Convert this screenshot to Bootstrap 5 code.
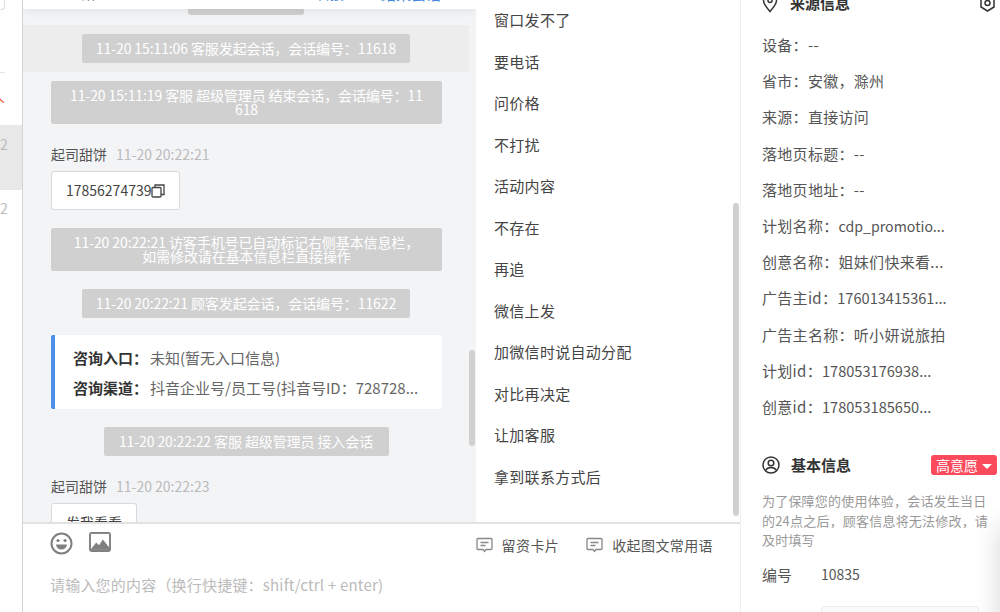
<!DOCTYPE html>
<html lang="zh">
<head>
<meta charset="utf-8">
<title>会话</title>
<link href="https://cdn.jsdelivr.net/npm/bootstrap@5.3.0/dist/css/bootstrap.min.css" rel="stylesheet">
<style>
html,body{height:612px;overflow:hidden;background:#fff}
body{font-family:"Noto Sans CJK SC",sans-serif;font-size:14px;color:#555;position:relative}
.shell{height:612px;width:1000px}
.side-rail{width:23px;flex:none;border-right:1px solid #d4d4d4;height:612px;overflow:hidden;color:#bbb;font-size:14px}
.rail-top{height:73px;border-bottom:1px solid #e6e6e6;width:5px}
.rail-top-box{width:5px;height:10px;border:1px solid #ddd;border-left:0;border-top:0;border-bottom-right-radius:4px}
.rail-name{height:52px;color:#e8623a;margin-left:-11px;padding-top:10px;font-size:16px}
.rail-sel{height:65px;background:#e8e8e8;margin-left:-8px;padding:9px 0 0 8px;text-align:left}
.rail-num{margin-left:-8px;padding:8px 0 0 8px}
.center-col{width:717px;flex:none;height:612px}
.upper-area{height:522px;overflow:hidden}
.chat-pane{width:453px;flex:none;background:#f3f4f6;height:522px;overflow:hidden;position:relative}
.chat-head{height:9px;background:#fff;box-shadow:0 2px 8px rgba(0,0,0,.08);overflow:hidden;width:453px;position:relative;z-index:2}
.chat-head-row{margin-top:-16px;line-height:19px;font-size:14px;color:#555}
.h1t{margin-left:59px;width:123px}
.h2t{width:111px;color:#888}
.h3t{color:#3f87e0;width:65px}
.h4t{color:#3f87e0;font-size:15px}
.chat-list{width:446px}
.sys-tip{background:#d0d0d0;color:#fff;border-radius:2px;text-align:center;line-height:14px;font-size:14px;padding:7px 10px 8px;word-break:break-all;letter-spacing:-.1px}
.tip-clip{width:116px;height:6px;padding:0;margin:0 0 0 165px;border-radius:0 0 3px 3px}
.tip-a{width:328px;margin:0 auto}
.tip-b{width:391px;margin-left:28px;padding-left:18px;padding-right:18px}
.tip-c{width:285px;margin:0 auto}
.hi-band{background:#ededed;margin-top:10px;height:47px;padding-top:9px}
.pad-b{margin-top:9px}
.who{margin:20px 0 0 28px;line-height:20px;color:#555}
.who-time{color:#bbb;margin-left:9px}
.bubble-box{margin:7px 0 0 28px;background:#fff;border:1px solid #d9d9d9;border-radius:3px;color:#444;height:39px;padding:0 14px;width:fit-content}
.tip-a.tip-d,.tip-c.tip-d{margin-top:18px;margin-left:auto;margin-right:auto}
.tip-b.tip-d{margin-top:18px;margin-left:28px;padding-left:10px;padding-right:10px}
.inq-box{margin:17px 0 0 28px;width:391px;height:74px;background:#fff;border-left:4px solid #4f8fec;border-radius:2px;padding:13px 18px 0;line-height:20px;color:#666;font-size:15px}
.inq-box b{color:#333;margin-right:2px}
.inq-line{margin-bottom:10px;white-space:nowrap;overflow:hidden;text-overflow:ellipsis}
.scroll-a{position:absolute;left:446px;top:350px;width:6px;height:96px;background:#d0d0d0;border-radius:3px}
.word-pane{width:264px;flex:none;height:522px;position:relative;padding:0 0 0 18px;overflow:hidden;color:#444;font-size:15px;letter-spacing:.3px}
.word-list{margin-top:-1px}
.word-item{height:41.5px;line-height:41.5px}
.scroll-b{position:absolute;left:257px;top:203px;width:6px;height:313px;background:#d0d0d0;border-radius:3px}
.input-area{height:90px;border-top:2px solid #e2e2e2;position:relative}
.input-tools{height:40px;padding:8px 27px 0}
.tool-gap{gap:16px}
.card-links{gap:27px;margin-top:-1px;color:#555;height:28px;letter-spacing:.4px}
.link-gap{gap:9px}
.ph-text{color:#bbb;font-size:15px;padding:10px 0 0 27px;line-height:22px;letter-spacing:.2px}
.right-col{width:260px;flex:none;height:612px;border-left:1px solid #eee;overflow:hidden;padding-left:21px;position:relative}
.info-head{font-weight:700;color:#333;font-size:15px;line-height:20px}
.src-head{margin-top:-7px;height:20px}
.info-line{height:36.2px;line-height:36.2px;font-size:15px;color:#555;white-space:nowrap;letter-spacing:.3px}
.run-a{font-size:14.2px;letter-spacing:0}
.run-b{font-size:14.6px;letter-spacing:0}
.info-list{margin-top:14px}
.base-block{margin-top:30px}
.tag-red{background:#fb4a5c;color:#fff;border-radius:3px;height:20px;line-height:20px;padding:0 5px;font-size:14px;font-weight:400;margin-right:3px;white-space:nowrap}
.tag-caret{display:inline-block;border:5px solid transparent;border-top:5px solid #fff;border-bottom:0;margin-left:4px;vertical-align:2px}
.note-text{font-size:13px;line-height:19.5px;color:#999;margin-top:16px;width:230px;letter-spacing:.2px}
.code-row{margin-top:14px;font-size:14px;color:#555}
.code-label{width:59px;font-size:15px}
.field-box{margin:20px 0 0 59px;width:158px;height:30px;background:#fafafa;border:1px solid #eee;border-radius:3px}
.gear-mark{margin-right:4px}
.head-ico{margin-right:11px}
.float-shadow{position:absolute;left:1012px;top:540px;width:300px;height:200px;box-shadow:0 0 24px 14px rgba(0,0,0,.14)}
svg{display:block;flex:none}
</style>
</head>
<body>
<div class="shell d-flex">
  <aside class="side-rail">
    <div class="rail-top"><div class="rail-top-box"></div></div>
    <div class="rail-name">人</div>
    <div class="rail-sel">2</div>
    <div class="rail-num">2</div>
  </aside>
  <div class="center-col d-flex flex-column">
    <div class="upper-area d-flex">
      <section class="chat-pane">
        <div class="chat-head">
          <div class="chat-head-row d-flex">
            <span class="h1t">所</span><span class="h2t">00:04:03</span><span class="h3t">转接</span><span class="h4t">结束会话</span>
          </div>
        </div>
        <div class="chat-list">
          <div class="sys-tip tip-clip"></div>
          <div class="hi-band"><div class="sys-tip tip-a">11-20 15:11:06 客服发起会话，会话编号：11618</div></div>
          <div class="sys-tip tip-b pad-b">11-20 15:11:19 客服 超级管理员 结束会话，会话编号：11618</div>
          <div class="who">起司甜饼<span class="who-time">11-20 20:22:21</span></div>
          <div class="bubble-box d-flex align-items-center">17856274739<svg width="14" height="14" viewBox="0 0 14 14" fill="none" stroke="#444" stroke-width="1.3"><rect x="1" y="3.5" width="9" height="9.5" rx="1"/><path d="M4 3.5V1h9v9.5h-3"/></svg></div>
          <div class="sys-tip tip-b tip-d">11-20 20:22:21 访客手机号已自动标记右侧基本信息栏，<br>如需修改请在基本信息栏直接操作</div>
          <div class="sys-tip tip-a tip-d">11-20 20:22:21 顾客发起会话，会话编号：11622</div>
          <div class="inq-box">
            <div class="inq-line"><b>咨询入口：</b>未知(暂无入口信息)</div>
            <div class="inq-line"><b>咨询渠道：</b>抖音企业号/员工号(抖音号ID：728728...</div>
          </div>
          <div class="sys-tip tip-c tip-d">11-20 20:22:22 客服 超级管理员 接入会话</div>
          <div class="who">起司甜饼<span class="who-time">11-20 20:22:23</span></div>
          <div class="bubble-box d-flex align-items-center">发我看看</div>
        </div>
        <div class="scroll-a"></div>
      </section>
      <section class="word-pane">
        <div class="word-list">
        <div class="word-item">窗口发不了</div>
        <div class="word-item">要电话</div>
        <div class="word-item">问价格</div>
        <div class="word-item">不打扰</div>
        <div class="word-item">活动内容</div>
        <div class="word-item">不存在</div>
        <div class="word-item">再追</div>
        <div class="word-item">微信上发</div>
        <div class="word-item">加微信时说自动分配</div>
        <div class="word-item">对比再决定</div>
        <div class="word-item">让加客服</div>
        <div class="word-item">拿到联系方式后</div>
        </div>
        <div class="scroll-b"></div>
      </section>
    </div>
    <div class="input-area">
      <div class="input-tools d-flex justify-content-between">
        <div class="d-flex tool-gap">
          <svg width="23" height="23" viewBox="0 0 23 23" fill="none" stroke="#808080" stroke-width="2"><circle cx="11.5" cy="11.5" r="10"/><circle cx="8" cy="8.5" r="1.6" fill="#808080" stroke="none"/><circle cx="15" cy="8.5" r="1.6" fill="#808080" stroke="none"/><path d="M6 12.5h11c-.5 3.3-2.6 5-5.500 5S6.500 15.800 6 12.500z" fill="#808080" stroke="none"/></svg>
          <svg width="22" height="20" viewBox="0 0 23 21"><rect x="0" y="0" width="23" height="21" rx="2.500" fill="#808080"/><rect x="2" y="2" width="19" height="16" fill="#fff"/><path d="M2 18l5.500-7 3 3 4-6 6.500 8v2H2z" fill="#808080"/></svg>
        </div>
        <div class="d-flex card-links">
          <div class="d-flex align-items-center link-gap"><svg width="17" height="16" viewBox="0 0 17 16" fill="none" stroke="#888" stroke-width="1.300"><path d="M2 1.500h13a1 1 0 0 1 1 1v9a1 1 0 0 1-1 1H10l-1.500 2-1.500-2H2a1 1 0 0 1-1-1v-9a1 1 0 0 1 1-1z"/><path d="M4.500 5.500h8M4.500 8.500h5"/></svg><span>留资卡片</span></div>
          <div class="d-flex align-items-center link-gap"><svg width="17" height="16" viewBox="0 0 17 16" fill="none" stroke="#888" stroke-width="1.300"><path d="M2 1.500h13a1 1 0 0 1 1 1v9a1 1 0 0 1-1 1H10l-1.500 2-1.500-2H2a1 1 0 0 1-1-1v-9a1 1 0 0 1 1-1z"/><path d="M4.500 5.500h8M4.500 8.500h5"/></svg><span>收起图文常用语</span></div>
        </div>
      </div>
      <div class="ph-text">请输入您的内容（换行快捷键：shift/ctrl + enter)</div>
    </div>
  </div>
  <aside class="right-col">
    <div class="info-head src-head d-flex align-items-center">
      <svg class="me-2" width="16" height="20" viewBox="0 0 16 20" fill="none" stroke="#333" stroke-width="1.500"><path d="M8 18.500C4 14 1.500 11 1.500 7.500a6.500 6.500 0 0 1 13 0C14.500 11 12 14 8 18.500z"/><circle cx="8" cy="7.500" r="2"/></svg>
      <span class="flex-grow-1 ms-1">来源信息</span>
      <svg class="gear-mark" width="17" height="18" viewBox="0 0 16 18" fill="none" stroke="#333" stroke-width="1.500"><path d="M8 1l6.500 4v8L8 17l-6.500-4V5z"/><circle cx="8" cy="9" r="2.500"/></svg>
    </div>
    <div class="info-list">
      <div class="info-line">设备：--</div>
      <div class="info-line">省市：安徽，滁州</div>
      <div class="info-line">来源：直接访问</div>
      <div class="info-line">落地页标题：--</div>
      <div class="info-line">落地页地址：--</div>
      <div class="info-line">计划名称：<span class="run-a">cdp_promotio...</span></div>
      <div class="info-line">创意名称：姐妹们快来看...</div>
      <div class="info-line">广告主id：<span class="run-b">176013415361...</span></div>
      <div class="info-line">广告主名称：听小妍说旅拍</div>
      <div class="info-line">计划id：<span class="run-b">178053176938...</span></div>
      <div class="info-line">创意id：<span class="run-b">178053185650...</span></div>
    </div>
    <div class="base-block">
      <div class="info-head d-flex align-items-center">
        <svg class="head-ico" width="18" height="18" viewBox="0 0 18 18" fill="none" stroke="#333" stroke-width="1.500"><circle cx="9" cy="9" r="8"/><circle cx="9" cy="7" r="2.800"/><path d="M3.500 14.500C4.500 12.500 6.500 11.500 9 11.500s4.500 1 5.500 3"/></svg>
        <span class="flex-grow-1">基本信息</span>
        <span class="tag-red">高意愿<i class="tag-caret"></i></span>
      </div>
      <div class="note-text">为了保障您的使用体验，会话发生当日的24点之后，顾客信息将无法修改，请及时填写</div>
      <div class="code-row d-flex"><span class="code-label">编号</span><span>10835</span></div>
      <div class="field-box"></div>
    </div>
  </aside>
</div>
<div class="float-shadow"></div>
<script src="https://cdn.jsdelivr.net/npm/bootstrap@5.3.0/dist/js/bootstrap.bundle.min.js"></script>
</body>
</html>
